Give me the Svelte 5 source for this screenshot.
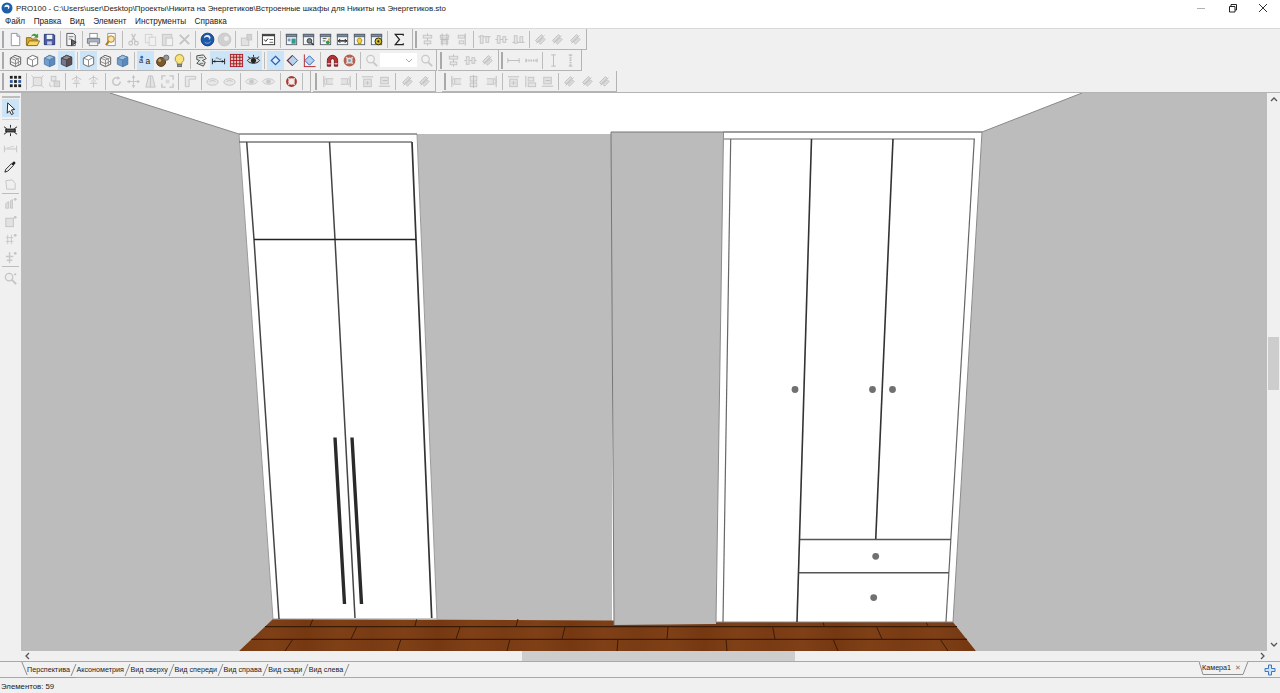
<script>
  const block = (a, b) =>
    `<g fill="#e6e6e6" stroke="#c4c4c4"><rect x="${a}" y="3.500" width="${b}" height="3"/><rect x="${a + 1}" y="9.500" width="${b - 2}" height="3"/></g>`;
  const vline = (x) => `<path d="M${x} 1.500v13" stroke="#bcbcbc" fill="none"/>`;
  const hline = (y) => `<path d="M1.500 ${y}h13" stroke="#bcbcbc" fill="none"/>`;
  const hblock = `<g fill="#e6e6e6" stroke="#c4c4c4"><rect x="3.500" y="4" width="3" height="8"/><rect x="9.500" y="5" width="3" height="6"/></g>`;
  const diag = `<g transform="rotate(-45 8 8)" fill="#dcdcdc" stroke="#c4c4c4"><rect x="3.500" y="5" width="9" height="2.500"/><rect x="4.500" y="9" width="7" height="2.500"/><path d="M2 8h12" fill="none"/></g>`;
  const cube = (front, top, side, line) =>
    `<path d="M2.500 5.500l5.500-3 5.500 2v7.500l-5.500 2.500-5.500-2.500z" fill="${front}" stroke="${line}"/><path d="M2.500 5.500l5.500 2 5.500-3-5.500-2z" fill="${top}" stroke="${line}"/><path d="M8 7.500v7l5.500-2.500v-7.500z" fill="${side}" stroke="${line}"/>`;
  const win = (inner) =>
    `<rect x="2.500" y="2.500" width="11" height="11" fill="#f4f6f8" stroke="#5a6470"/><rect x="2.500" y="2.500" width="11" height="2.500" fill="#6f8faf" stroke="#5a6470"/>${inner}`;
  const lens = (c) =>
    `<circle cx="7" cy="6.500" r="4" fill="#f2f2f2" stroke="${c}" stroke-width="1.300"/><path d="M10 10l4 4" stroke="${c}" stroke-width="2"/>`;

  const icons = {
    new: `<path d="M3.500 1.500h6l3 3v10h-9z" fill="#fff" stroke="#8a94a6"/><path d="M9.500 1.500v3h3" fill="#dfe5ee" stroke="#8a94a6"/>`,
    open: `<path d="M1.500 6h5l1 1.500h5.500v6.500h-11.500z" fill="#d9a92f" stroke="#8d6a14"/><path d="M2 14.500l2.500-5h11l-2.500 5z" fill="#f4d667" stroke="#8d6a14"/><path d="M6.500 5c.8-3 4-4 6-2l1.500-1.500v4.500h-4.500l1.600-1.500c-1.300-1-3-.8-4.600.5z" fill="#3f9f3c"/>`,
    save: `<path d="M2.500 2.500h10l1 1v10h-11z" fill="#4a5ca8" stroke="#2a3674"/><rect x="5" y="3" width="6" height="4.500" fill="#eef1f6"/><rect x="5.500" y="10" width="5" height="3.500" fill="#c5cbe0"/>`,
    props: `<path d="M3 1.500h7l2 2v11h-9z" fill="#f3f3f3" stroke="#555"/><path d="M5 5h5M5 7.500h3" stroke="#777"/><path d="M8 8l5 3-5 3.500z" fill="#59636e" stroke="#333"/>`,
    print: `<rect x="4" y="1.500" width="8" height="5" fill="#fff" stroke="#8c8c8c"/><path d="M1.500 7h13v5h-13z" fill="#b9bec6" stroke="#74787e"/><rect x="3.500" y="10.500" width="9" height="4" fill="#f2f2f2" stroke="#8c8c8c"/><path d="M2 8.500h12" stroke="#8aa4c4"/>`,
    preview: `<path d="M4 1.500h8v13h-8z" fill="#fff" stroke="#8a94a6"/><circle cx="7.500" cy="7.500" r="3.500" fill="#f5e6a8" stroke="#b07a20"/><path d="M5 10l-3 4" stroke="#b07a20" stroke-width="2"/>`,
    cut: `<g fill="none" stroke="#c4c4c4" stroke-width="1.300"><circle cx="5" cy="12" r="2"/><circle cx="11" cy="12" r="2"/><path d="M6 10l4-8M10 10l-4-8"/></g>`,
    copy: `<g fill="#f0f0f0" stroke="#d0d0d0"><rect x="2.500" y="2.500" width="7" height="9"/><rect x="6.500" y="5.500" width="7" height="9"/></g>`,
    paste: `<rect x="2.500" y="2.500" width="10" height="12" fill="#dedede" stroke="#c6c6c6"/><rect x="6.500" y="6.500" width="7" height="8" fill="#f2f2f2" stroke="#c8c8c8"/>`,
    del: `<path d="M3 3l10 10M13 3l-10 10" stroke="#c4c4c4" stroke-width="2"/>`,
    globe: `<circle cx="8" cy="8" r="6.800" fill="#1f57a8" stroke="#123c7c"/><path d="M4.500 5c2-2.500 5.500-2 6.500 0 .8 2-1 4-3 3.500 2 .2 2.500-1.500 1.500-2.500-1.200-1-3.500-1-5 1z" fill="#e8f0fa"/><path d="M5 11c2 1.500 5 1.300 6.500-1" stroke="#6fb0ec" fill="none"/>`,
    globeoff: `<circle cx="8" cy="8" r="6.800" fill="#d0d0d0" stroke="#c4c4c4"/><circle cx="10" cy="7" r="2.500" fill="#ededed"/>`,
    pkg: `<rect x="2.500" y="6.500" width="8" height="8" fill="#e2e2e2" stroke="#c4c4c4"/><rect x="8.500" y="2.500" width="5" height="6" fill="#d2d2d2" stroke="#c4c4c4"/>`,
    dialog: `<rect x="1.500" y="2.500" width="13" height="11" fill="#fff" stroke="#333"/><rect x="1.500" y="2.500" width="13" height="2" fill="#444"/><path d="M3.500 8l1.500 2 2.500-3" stroke="#222" fill="none"/><path d="M9 8h4M9 11h4" stroke="#666"/>`,
    w1: win(`<rect x="8" y="7" width="4.500" height="5.500" fill="#26a08c"/><rect x="4" y="7" width="3" height="3" fill="#7a95c0"/>`),
    w2: win(`<circle cx="9" cy="9.500" r="2.500" fill="#7d8a99" stroke="#333"/><path d="M11 11.500l2.500 2.500" stroke="#333" stroke-width="1.500"/>`),
    w3: win(`<path d="M5 7h4M5 9.500h3" stroke="#555"/><circle cx="10.500" cy="11" r="2" fill="#2f9b44"/><circle cx="12" cy="8" r="1.300" fill="#d9a92f"/>`),
    w4: win(`<path d="M3.500 9.500h9" stroke="#111" stroke-width="1.400"/><path d="M5.500 7.500l-2 2 2 2M10.500 7.500l2 2-2 2" stroke="#111" fill="none"/>`),
    w5: win(`<path d="M8 6.500a2.500 2.500 0 0 1 1.500 4.500v1.500h-3v-1.500a2.500 2.500 0 0 1 1.500-4.500z" fill="#f4d23c" stroke="#a88a14"/>`),
    w6: win(`<circle cx="10" cy="10" r="3.600" fill="#d9c21c" stroke="#222"/><circle cx="10" cy="10" r="1.200" fill="#222"/>`),
    sigma: `<path d="M12 4v-1.500h-8.500l4.500 5.500-4.500 5.500h8.500v-1.500" fill="none" stroke="#222" stroke-width="1.300"/>`,
    a1: vline(8) + block(3.5, 9),
    a2: block(3.5, 9) + `<path d="M3.500 8h9" stroke="#bcbcbc"/>` + vline(5.5) + vline(10.5),
    a3: vline(12) + block(4.5, 7),
    h1: hline(5) + hblock,
    h2: hline(8) + hblock,
    h3: hline(11) + hblock,
    d1: diag,
    wire: `<path d="M2.500 5.500l5-3 6 2v7.500l-5.500 2.500-5.500-2.500z" fill="#f3f3f3" stroke="#555"/><path d="M2.500 5.500l5.500 2 5.500-3M8 7.500v7M5 4l6 2.500v6M2.500 9l5.500 2.500 5.500-3" fill="none" stroke="#888"/>`,
    white: `<path d="M2.500 5.500l5.500-3 5.500 2v7.500l-5.500 2.500-5.500-2.500z" fill="#fff" stroke="#666"/><path d="M2.500 5.500l5.500 2 5.500-3M8 7.500v7" fill="none" stroke="#888"/>`,
    blue: cube("#6f9fd0", "#9cc0e4", "#5a8ac0", "#5a7ea4"),
    dark: cube("#74788a", "#8d8d94", "#5e4c50", "#4a4448"),
    dims: `<text x="1" y="11" font-size="8" font-family="Liberation Sans, sans-serif" fill="#222">a</text><text x="8" y="12" font-size="9" font-family="Liberation Sans, sans-serif" fill="#222">a</text><circle cx="4" cy="4.500" r="1.500" fill="#2f6fb0"/>`,
    balls: `<circle cx="6.500" cy="9.500" r="4.800" fill="#7a5a2c" stroke="#4a3414"/><circle cx="5" cy="8" r="1.500" fill="#c4a272"/><circle cx="12" cy="5" r="2.800" fill="#9a9a9a" stroke="#666"/>`,
    bulb: `<path d="M8 1.500a4.800 4.800 0 0 1 2.500 8.800v1.700h-5v-1.700a4.800 4.800 0 0 1 2.500-8.800z" fill="#f7e27c" stroke="#a88c30"/><rect x="6" y="12" width="4" height="2.500" fill="#9a9a9a" stroke="#666"/>`,
    tag: `<path d="M3 3l7-1 3 4-4 2 3 2-2 4-7-3 3-3-3-1z" fill="#e8e8e8" stroke="#444"/><path d="M5 5h5M6 11h4" stroke="#2f7f7f"/>`,
    dim: `<path d="M1.500 6v6M14.500 6v6" stroke="#222"/><path d="M2 9h12" stroke="#222"/><path d="M2 9l2.500-1.500v3zM14 9l-2.500-1.500v3z" fill="#222"/><path d="M5 6c1-1 2-1 3 0s2 1 3 0" fill="none" stroke="#666"/>`,
    grid: `<rect x="1.500" y="1.500" width="13" height="13" fill="#e6c4c0" stroke="#a81c24"/><path d="M1.500 4.500h13M1.500 8h13M1.500 11.500h13M5 1.500v13M8 1.500v13M11.500 1.500v13" stroke="#a81c24"/>`,
    eye: `<path d="M1.500 8c2.500-4 10.500-4 13 0-2.500 4-10.500 4-13 0z" fill="#d8d8d8" stroke="#222"/><circle cx="8" cy="8" r="2.800" fill="#222"/><path d="M2 4l2 1M14 4l-2 1M8 2v2" stroke="#222"/>`,
    diam: `<path d="M8 3.500l4.500 4.500-4.500 4.500-4.500-4.500z" fill="#dcecfa" stroke="#2a62b8" stroke-width="1.300"/>`,
    diam2: `<path d="M8 2.500l5.500 5.500-5.500 5.500-5.500-5.500z" fill="#b5d3ee" stroke="#2a62b8"/><path d="M8 2.500l-5.500 5.500 5.500 5.500" fill="none" stroke="#8a2a30" stroke-width="1.200"/>`,
    diam3: `<path d="M8 3l5 5-5 5-5-5z" fill="#b5d3ee" stroke="#2a62b8"/><path d="M2 14.500h12.500M2.500 1.500v13" stroke="#b3242c"/>`,
    magnet: `<path d="M2.500 14v-6a5.500 5.500 0 0 1 11 0v6h-3.500v-6a2 2 0 0 0-4 0v6z" fill="#b4343a" stroke="#6f1c20"/><path d="M2.500 11.500h3.500M10 11.500h3.500" stroke="#fff"/>`,
    buoy: `<circle cx="8" cy="8" r="4.800" fill="#ddd" stroke="#b8604e" stroke-width="3"/><path d="M4.500 4.500l1.500 1.500M11.500 4.500l-1.500 1.500M4.500 11.500l1.500-1.500M11.500 11.500l-1.500-1.500" stroke="#d8d8d8" stroke-width="1.600"/><circle cx="8" cy="8" r="1.600" fill="#8a9ab0"/>`,
    zoom: lens("#c8c8c8"),
    mh: `<path d="M2 8h12" stroke="#bcbcbc"/><path d="M2 5.500v5M14 5.500v5" stroke="#bcbcbc"/>`,
    mh2: `<path d="M2 8h12" stroke="#bcbcbc" stroke-width="2" stroke-dasharray="1.500 1"/><path d="M2 6v4M14 6v4" stroke="#bcbcbc"/>`,
    mi: `<path d="M8 2v12M5.500 2h5M5.500 14h5" stroke="#bcbcbc"/>`,
    mi2: `<path d="M8 2v12" stroke="#bcbcbc" stroke-width="2" stroke-dasharray="1.500 1"/><path d="M6 2h4M6 14h4" stroke="#bcbcbc"/>`,
    dots: `<g fill="#222"><rect x="2" y="2" width="3" height="3"/><rect x="6.500" y="2" width="3" height="3"/><rect x="11" y="2" width="3" height="3"/><rect x="2" y="11" width="3" height="3"/><rect x="6.500" y="11" width="3" height="3"/><rect x="11" y="11" width="3" height="3"/></g><g fill="#2a5aa8"><rect x="2" y="6.500" width="3" height="3"/><rect x="11" y="6.500" width="3" height="3"/></g><rect x="6.500" y="6.500" width="3" height="3" fill="#222"/>`,
    box: `<rect x="3.500" y="3.500" width="9" height="9" fill="#e4e4e4" stroke="#c4c4c4"/><path d="M1.500 1.500l3 3M14.500 1.500l-3 3M1.500 14.500l3-3M14.500 14.500l-3-3" stroke="#c8c8c8"/>`,
    box2: `<rect x="4.500" y="2.500" width="5" height="5" fill="#e4e4e4" stroke="#c4c4c4"/><rect x="7.500" y="7.500" width="6" height="6" fill="#dadada" stroke="#c4c4c4"/><path d="M3 9v4h3" fill="none" stroke="#c8c8c8"/>`,
    up: `<path d="M8 1.500v13M3 6l5-3 5 3M4 10h8" fill="none" stroke="#c4c4c4"/><rect x="5.500" y="6" width="5" height="3" fill="#dcdcdc"/>`,
    rot: `<path d="M12 8a4 4 0 1 1-2-3.500" fill="none" stroke="#c4c4c4" stroke-width="1.500"/><path d="M9 2l3 2.500-3 1.500z" fill="#c4c4c4"/>`,
    move: `<path d="M8 1.500v13M1.500 8h13" stroke="#c4c4c4"/><path d="M8 1l2 3h-4zM8 15l2-3h-4zM1 8l3-2v4zM15 8l-3-2v4z" fill="#c4c4c4"/>`,
    trap: `<path d="M6 2h4l3 12h-10z" fill="#e2e2e2" stroke="#c4c4c4"/><path d="M8 2v12" stroke="#c4c4c4"/>`,
    corners: `<path d="M2 6v-4h4M14 6v-4h-4M2 10v4h4M14 10v4h-4" fill="none" stroke="#c4c4c4" stroke-width="1.400"/><rect x="6" y="6" width="4" height="4" fill="#d8d8d8"/>`,
    panel: `<path d="M2.500 2.500h11v3h-7v8h-4z" fill="#e8e8e8" stroke="#c4c4c4"/>`,
    oval: `<ellipse cx="8" cy="8.500" rx="6" ry="3.500" fill="#e8e8e8" stroke="#c4c4c4"/><path d="M5 8.500a3 1.500 0 0 1 6 0" fill="none" stroke="#c4c4c4"/>`,
    eyeoff: `<path d="M1.500 8c2.500-4 10.500-4 13 0-2.500 4-10.500 4-13 0z" fill="#e8e8e8" stroke="#c8c8c8"/><circle cx="8" cy="8" r="2.500" fill="#c8c8c8"/>`,
    buoyred: `<circle cx="8" cy="8" r="4.600" fill="#eee" stroke="#b2342c" stroke-width="2.400"/><path d="M4.500 4.500l1.500 1.500M11.500 4.500l-1.500 1.500M4.500 11.500l1.500-1.500M11.500 11.500l-1.500-1.500" stroke="#e0d8d4" stroke-width="1.600"/>`,
    fl: `<path d="M3 2v12" stroke="#bcbcbc"/><path d="M5 4l-2 4 2 4M13 5h-7v6h7" fill="#e2e2e2" stroke="#c4c4c4"/>`,
    fr: `<path d="M13 2v12" stroke="#bcbcbc"/><path d="M11 4l2 4-2 4M3 5h7v6h-7" fill="#e2e2e2" stroke="#c4c4c4"/>`,
    top: `<path d="M2 3h12" stroke="#bcbcbc"/><rect x="4" y="5.500" width="8" height="8" fill="#e2e2e2" stroke="#c4c4c4"/><path d="M6 9.500h4M8 7.500v4" stroke="#c4c4c4"/>`,
    topb: `<path d="M2 13h12" stroke="#bcbcbc"/><rect x="4" y="3.500" width="8" height="7" fill="#e2e2e2" stroke="#c4c4c4"/><path d="M6 7h5" stroke="#bcbcbc"/>`,
    s1: `<rect x="4.500" y="2.500" width="7" height="5" fill="#e4e4e4" stroke="#c4c4c4"/><rect x="4.500" y="9.500" width="7" height="4" fill="#e4e4e4" stroke="#c4c4c4"/><path d="M8 1v14" stroke="#bcbcbc"/>`,
    s2: `<path d="M3 2v12" stroke="#bcbcbc"/><rect x="5.500" y="3.500" width="6" height="4" fill="#e4e4e4" stroke="#c4c4c4"/><rect x="5.500" y="9.500" width="8" height="4" fill="#e4e4e4" stroke="#c4c4c4"/>`
  };

  const parse = (s) =>
    s.split(" ").map((t) => {
      if (t === "|") return { sep: true };
      if (t === "combo") return { combo: true };
      return { name: t.replace("!", ""), on: t[0] === "!" };
    });

  const rows = [
    [
      { items: parse("new open save | props | print preview | cut copy paste del | globe globeoff | pkg | dialog | w1 w2 w3 w4 w5 w6 | sigma"), cls: "b1" },
      { items: parse("a1 a2 a3 | h1 h2 h3 | d1 d1 d1"), cls: "" }
    ],
    [
      { items: parse("wire white blue !dark | !white wire blue | !dims balls bulb | tag !dim !grid !eye | !diam diam2 diam3 | magnet buoy | zoom combo zoom"), cls: "b2" },
      { items: parse("a1 h2 d1"), cls: "" },
      { items: parse("mh mh2 | mi mi2"), cls: "" }
    ],
    [
      { items: parse("dots | box box2 | up up | rot move trap corners | panel | oval oval | eyeoff eyeoff | buoyred |"), cls: "b3" },
      { items: parse("fl fr | top topb | d1 d1"), cls: "b4" },
      { items: parse("fl s1 fr | top s2 topb | d1 d1 d1"), cls: "b5" }
    ]
  ];

  const sideIcons = {
    cursor: `<path d="M5 2l7.500 7-3.500.5 2 4-2 1-2-4-2.500 2.500z" fill="#fff" stroke="#222"/>`,
    light: `<rect x="3" y="6.500" width="10" height="3" fill="#555" stroke="#111"/><path d="M1 4l3 2M15 4l-3 2M1 12l3-2M15 12l-3-2M8 2v3M8 11v3" stroke="#222"/>`,
    dim2: `<path d="M1.500 5v7M14.500 5v7M2 8.500h12" stroke="#c4c4c4"/><path d="M4 6.500c1 1 2 1 4 0s3-1 4 0" fill="none" stroke="#ccc"/>`,
    pick: `<path d="M2 14l1-3 6-6 2 2-6 6z" fill="#eee" stroke="#222"/><path d="M9 5l2-2c1-1 3 1 2 2l-2 2z" fill="#222"/>`,
    shape: `<path d="M3 4l7-1 3 4v6h-9z" fill="#efefef" stroke="#c4c4c4"/>`,
    e1: `<path d="M3 13v-5l3-2v7zM8 13v-8l2-1v9z" fill="#ddd" stroke="#c4c4c4"/><circle cx="13" cy="3.500" r="1.500" fill="#c4c4c4"/>`,
    e2: `<rect x="3" y="4.500" width="8" height="9" fill="#e2e2e2" stroke="#c4c4c4"/><circle cx="13" cy="3.500" r="1.500" fill="#c4c4c4"/>`,
    e3: `<path d="M5 3v10M9 3v10M3 6h8M3 10h8" stroke="#c8c8c8"/><circle cx="13" cy="3.500" r="1.500" fill="#c4c4c4"/>`,
    e4: `<path d="M7 2v12M3 7h8M4 11h6" stroke="#c8c8c8" stroke-width="1.500"/><circle cx="13" cy="3.500" r="1.500" fill="#c4c4c4"/>`,
    find: `<circle cx="6.500" cy="6.500" r="4" fill="#eee" stroke="#c4c4c4" stroke-width="1.300"/><path d="M9.500 9.500l4.500 4.500" stroke="#c4c4c4" stroke-width="2"/><circle cx="13" cy="3.500" r="1.200" fill="#c4c4c4"/>`
  };

  const tabs = ["Перспектива", "Аксонометрия", "Вид сверху", "Вид спереди", "Вид справа", "Вид сзади", "Вид слева"];
  const menu = ["Файл", "Правка", "Вид", "Элемент", "Инструменты", "Справка"];

  const joints = [
    [313, 619, 310, 626], [416.700, 619, 415, 626], [518, 619, 516, 626], [823, 622, 824, 626], [926, 622, 928, 626],
    [356.700, 627, 351, 639], [460, 627, 456, 639], [565, 627, 562, 639], [668, 627, 667, 639], [772.700, 627, 775, 639], [876.700, 627, 882, 639],
    [293, 639, 285, 651], [401, 639, 397, 651], [510, 639, 507, 651], [618, 639, 617, 651], [726, 639, 727, 651], [833, 639, 838, 651], [940, 639, 948, 651]
  ];
  const knobs = [[795, 389.500], [872.500, 389.500], [892.500, 389.500], [875.700, 556.300], [873.700, 597.600]];
</script>

<div class="app">
  <header class="title">
    <svg class="logo" viewBox="0 0 12 12" width="12" height="12">
      <circle cx="6" cy="6" r="5.500" fill="#1d5fa8" />
      <path d="M3.500 4c1.500-2 4.500-1.500 5 .5.300 2-1.500 3-2.500 2.500 1 0 1.500-1 1-1.800-.8-.8-2.500-.8-3.500.3z" fill="#fff" />
    </svg>
    <span>PRO100 - C:\Users\user\Desktop\Проекты\Никита на Энергетиков\Встроенные шкафы для Никиты на Энергетиков.sto</span>
    <div class="winbtns">
      <svg viewBox="0 0 10 10" width="10" height="10"><path d="M0 5.500h8" stroke="#b0b0b0" fill="none" /></svg>
      <svg viewBox="0 0 10 10" width="10" height="10"><path d="M1.500 3.500h5.500v5.500h-5.500zM3 3.500v-2h5.500v5.500h-1.500" stroke="#222" fill="none" /></svg>
      <svg viewBox="0 0 10 10" width="10" height="10"><path d="M1 1l8 8M9 1l-8 8" stroke="#333" fill="none" /></svg>
    </div>
  </header>

  <nav class="menu">
    {#each menu as m}
      <span>{m}</span>
    {/each}
  </nav>

  <div class="bars">
    {#each rows as row}
      <div class="row">
        {#each row as band}
          <div class="band {band.cls}">
            <i class="grip"></i>
            {#each band.items as it}
              {#if it.sep}
                <i class="sep"></i>
              {:else if it.combo}
                <div class="combo">
                  <svg viewBox="0 0 8 5" width="8" height="5"><path d="M1 1l3 3 3-3" fill="none" stroke="#aaa" /></svg>
                </div>
              {:else}
                <span class="btn" class:on={it.on}>
                  <svg viewBox="0 0 16 16" width="15" height="15">{@html icons[it.name]}</svg>
                </span>
              {/if}
            {/each}
          </div>
        {/each}
      </div>
    {/each}
  </div>

  <main class="work">
    <aside class="side">
      <i class="hgrip"></i>
      <span class="sbtn on"><svg viewBox="0 0 16 16" width="15" height="15">{@html sideIcons.cursor}</svg></span>
      <i class="hsep faint"></i>
      {#each ["light", "dim2", "pick", "shape"] as name}
        <span class="sbtn"><svg viewBox="0 0 16 16" width="15" height="15">{@html sideIcons[name]}</svg></span>
      {/each}
      <i class="hsep"></i>
      {#each ["e1", "e2", "e3", "e4"] as name}
        <span class="sbtn"><svg viewBox="0 0 16 16" width="15" height="15">{@html sideIcons[name]}</svg></span>
      {/each}
      <i class="hsep last"></i>
      <span class="sbtn"><svg viewBox="0 0 16 16" width="15" height="15">{@html sideIcons.find}</svg></span>
    </aside>

    <div class="view">
      <svg class="scene" viewBox="21 93 1246 558" width="1246" height="558">
        <defs>
          <linearGradient id="wood" x1="0" x2="1" y1="0" y2="0" gradientTransform="scale(.09 1)" spreadMethod="reflect">
            <stop offset="0" stop-color="#793b13" />
            <stop offset=".5" stop-color="#7f4017" />
            <stop offset="1" stop-color="#753811" />
          </linearGradient>
        </defs>
        <rect x="21" y="93" width="1246" height="558" fill="#fff" />

        <!-- walls -->
        <polygon points="21,93 110,93 239,134 274,619 239,651 21,651" fill="#bcbcbc" />
        <polygon points="417,134 612,134 612,625 437,620" fill="#bcbcbc" />
        <polygon points="982,132 1082,93 1267,93 1267,651 976,651 953,622" fill="#bcbcbc" />
        <path d="M110 93L239 134M982 132L1082 93" stroke="#888" fill="none" />

        <!-- floor -->
        <polygon points="273,619 953,622 976,651 239,651" fill="url(#wood)" />
        <path d="M265 626.700H957M251.500 639.300H967" stroke="#3a1b08" stroke-width="1.200" fill="none" />
        {#each joints as j}
          <line x1={j[0]} y1={j[1]} x2={j[2]} y2={j[3]} stroke="#3a1b08" />
        {/each}

        <!-- left wardrobe -->
        <polygon points="239,134 417,134 437,619 273,619" fill="#fff" stroke="#9a9a9a" />
        <path d="M239 134H417" stroke="#777" stroke-width="1.200" fill="none" />
        <path d="M239 142H412" stroke="#777" stroke-width="1.500" fill="none" />
        <path d="M246.700 142L254 239.500L279 619" stroke="#444" stroke-width="1.500" fill="none" />
        <path d="M329.500 142L335 239.500L355 618" stroke="#444" stroke-width="1.500" fill="none" />
        <path d="M412 142L416 239.500L431.700 618" stroke="#333" stroke-width="1.700" fill="none" />
        <path d="M254 239.500H416" stroke="#222" stroke-width="1.600" fill="none" />
        <path d="M335 437.500L344.500 604M352 437.500L361.500 604" stroke="#2a2a2a" stroke-width="3.400" fill="none" />

        <!-- pillar -->
        <polygon points="611,132 724,132 716,624 614,625" fill="#bbb" />
        <path d="M724 132H611L614 625" stroke="#777" fill="none" />

        <!-- right wardrobe -->
        <polygon points="723.500,132 982,132 953,622 716,622" fill="#fff" stroke="#8a8a8a" />
        <path d="M723.500 132H982" stroke="#777" fill="none" />
        <path d="M723.500 139H975" stroke="#999" stroke-width="1.400" fill="none" />
        <path d="M730.700 139L723 622" stroke="#666" stroke-width="1.200" fill="none" />
        <path d="M811.500 139L797 622" stroke="#333" stroke-width="1.600" fill="none" />
        <path d="M893 139L875.700 540" stroke="#333" stroke-width="1.600" fill="none" />
        <path d="M974.300 139L946 622" stroke="#666" stroke-width="1.200" fill="none" />
        <path d="M800 539.500H951M799 572.700H949" stroke="#555" stroke-width="1.500" fill="none" />
        {#each knobs as k}
          <circle cx={k[0]} cy={k[1]} r="3.400" fill="#707070" />
        {/each}
      </svg>

      <div class="vscroll">
        <svg viewBox="0 0 8 5" width="8" height="5"><path d="M1 4l3-3 3 3" fill="none" stroke="#555" stroke-width="1.300" /></svg>
        <div class="vtrack"><i></i></div>
        <svg viewBox="0 0 8 5" width="8" height="5"><path d="M1 1l3 3 3-3" fill="none" stroke="#555" stroke-width="1.300" /></svg>
      </div>
      <div class="hscroll">
        <svg viewBox="0 0 5 8" width="5" height="8"><path d="M4 1l-3 3 3 3" fill="none" stroke="#555" stroke-width="1.300" /></svg>
        <div class="htrack"><i></i></div>
        <svg viewBox="0 0 5 8" width="5" height="8"><path d="M1 1l3 3-3 3" fill="none" stroke="#555" stroke-width="1.300" /></svg>
      </div>
    </div>
  </main>

  <div class="tabs">
    {#each tabs as t, i}
      <span class="tab" class:first={i === 0}>{t}</span>
    {/each}
    <div class="cam">
      <svg viewBox="0 0 50 15" width="50" height="15"><path d="M0 .5L4 13.500H44L49 .5" fill="#f1f1f1" stroke="#8e8e8e" /></svg>
      <span>Камера1</span>
      <b>✕</b>
    </div>
    <svg class="plus" viewBox="0 0 12 12" width="12" height="12">
      <path d="M4.500 1h3v3.500h3.500v3h-3.500v3.500h-3v-3.500h-3.500v-3h3.500z" fill="#cfe2f6" stroke="#3a78c0" />
    </svg>
  </div>

  <footer class="status">Элементов: 59</footer>
</div>

<style>
  :global(body) {
    margin: 0;
    background: #f0f0f0;
  }
  .app {
    width: 1280px;
    height: 693px;
    display: flex;
    flex-direction: column;
    overflow: hidden;
    font-family: "Liberation Sans", Arial, sans-serif;
    font-size: 7.9px;
    color: #222;
  }
  .title {
    height: 14px;
    background: #fff;
    display: flex;
    align-items: center;
    padding-left: 1px;
    padding-top: 2px;
    box-sizing: border-box;
    gap: 3px;
    white-space: nowrap;
  }
  .logo {
    flex: none;
  }
  .winbtns {
    margin-left: auto;
    display: flex;
    gap: 20.500px;
    padding-right: 12px;
  }
  .menu {
    height: 14px;
    background: #fff;
    display: flex;
    align-items: center;
    gap: 8.500px;
    padding-left: 5px;
    font-size: 8.2px;
  }
  .bars {
    background: #f0f0f0;
    border-top: 1px solid #d9d9d9;
    flex: none;
  }
  .row {
    display: flex;
    height: 21px;
  }
  .band {
    display: flex;
    align-items: center;
    padding-left: 2px;
    box-sizing: border-box;
    height: 21px;
    border-right: 1px solid #b4b4b4;
    border-bottom: 1px solid #b4b4b4;
    padding-right: 2px;
  }
  .row:last-child {
    border-bottom: 1px solid #b4b4b4;
    height: 21px;
  }
  .b1 {
    padding-right: 4px;
  }
  .b2 {
    padding-right: 1px;
    margin-right: 1px;
  }
  .b3 {
    padding-right: 5px;
  }
  .b4 {
    margin-left: 2px;
    padding-right: 2px;
  }
  .b5 {
    margin-left: 6px;
    padding-right: 3px;
  }
  .grip {
    width: 2px;
    height: 17px;
    background: #a9a9a9;
    margin-right: 2.500px;
    flex: none;
  }
  .sep {
    width: 1px;
    height: 17px;
    background: #bcbcbc;
    margin: 0 2.150px;
    flex: none;
  }
  .btn {
    width: 17.100px;
    height: 19px;
    display: flex;
    align-items: center;
    justify-content: center;
    flex: none;
    box-sizing: border-box;
  }
  .on {
    background: #cce4f7;
  }
  .combo {
    width: 37px;
    height: 14px;
    background: #fff;
    display: flex;
    align-items: center;
    justify-content: flex-end;
    padding-right: 4px;
    box-sizing: border-box;
    margin-right: 1px;
    flex: none;
  }
  .work {
    flex: 1;
    display: flex;
    min-height: 0;
  }
  .side {
    width: 21px;
    flex: none;
    display: flex;
    flex-direction: column;
    align-items: center;
    padding-top: 3px;
    box-sizing: border-box;
    background: #f0f0f0;
  }
  .hgrip {
    width: 18px;
    height: 2px;
    background: #bdbdbd;
    margin-bottom: 1px;
    flex: none;
  }
  .hsep {
    width: 17px;
    height: 1px;
    background: #bdbdbd;
    flex: none;
  }
  .hsep.faint {
    margin: 1.500px 0;
    background: #d4d4d4;
  }
  .hsep.last {
    margin-bottom: 2px;
  }
  .sbtn {
    width: 17px;
    height: 18px;
    display: flex;
    align-items: center;
    justify-content: center;
    flex: none;
  }
  .view {
    flex: 1;
    display: grid;
    grid-template-columns: 1fr 13px;
    grid-template-rows: 558px 10px;
    min-width: 0;
  }
  .scene {
    display: block;
  }
  .vscroll {
    display: flex;
    flex-direction: column;
    align-items: center;
    justify-content: space-between;
    padding: 4px 0;
    box-sizing: border-box;
    background: #f0f0f0;
  }
  .vtrack {
    flex: 1;
    width: 100%;
    padding-top: 235px;
  }
  .vtrack i {
    display: block;
    height: 53px;
    background: #cdcdcd;
    margin: 0 1px;
  }
  .hscroll {
    grid-column: 1 / 3;
    display: flex;
    align-items: center;
    padding: 0 15px 0 4px;
    box-sizing: border-box;
    background: #f0f0f0;
  }
  .htrack {
    flex: 1;
    height: 100%;
    padding-left: 492px;
  }
  .htrack i {
    display: block;
    width: 273px;
    height: 100%;
    background: #cdcdcd;
  }
  .tabs {
    height: 17px;
    flex: none;
    display: flex;
    align-items: center;
    padding-left: 27px;
    box-sizing: border-box;
    border-top: 1px solid #a8a8a8;
    border-bottom: 1px solid #a8a8a8;
    background: #f1f1f1;
    font-size: 7.2px;
  }
  .tab {
    position: relative;
    padding-right: 6.500px;
    white-space: nowrap;
    line-height: 15px;
  }
  .tab::after {
    content: "";
    position: absolute;
    right: 2.500px;
    top: 2px;
    height: 12px;
    border-right: 1px solid #8e8e8e;
    transform: skewX(-22deg);
  }
  .first {
    box-shadow: 0 1px 0 -0.500px #8e8e8e;
  }
  .first::before {
    content: "";
    position: absolute;
    left: -3px;
    top: 0;
    height: 13px;
    border-left: 1px solid #8e8e8e;
    transform: skewX(22deg);
  }
  .cam {
    margin-left: auto;
    margin-right: 16px;
    width: 49px;
    height: 15px;
    line-height: 14px;
    padding-left: 3px;
    box-sizing: border-box;
    white-space: nowrap;
    position: relative;
    align-self: flex-start;
    margin-top: -1px;
    display: flex;
    gap: 4px;
  }
  .cam svg {
    position: absolute;
    left: 0;
    top: 0;
  }
  .cam span,
  .cam b {
    position: relative;
  }
  .cam b {
    color: #777;
    font-weight: 400;
  }
  .plus {
    margin-right: 4px;
  }
  .status {
    height: 15px;
    flex: none;
    line-height: 17px;
    padding-left: 1px;
    background: #f0f0f0;
    font-size: 7.800px;
  }
</style>
